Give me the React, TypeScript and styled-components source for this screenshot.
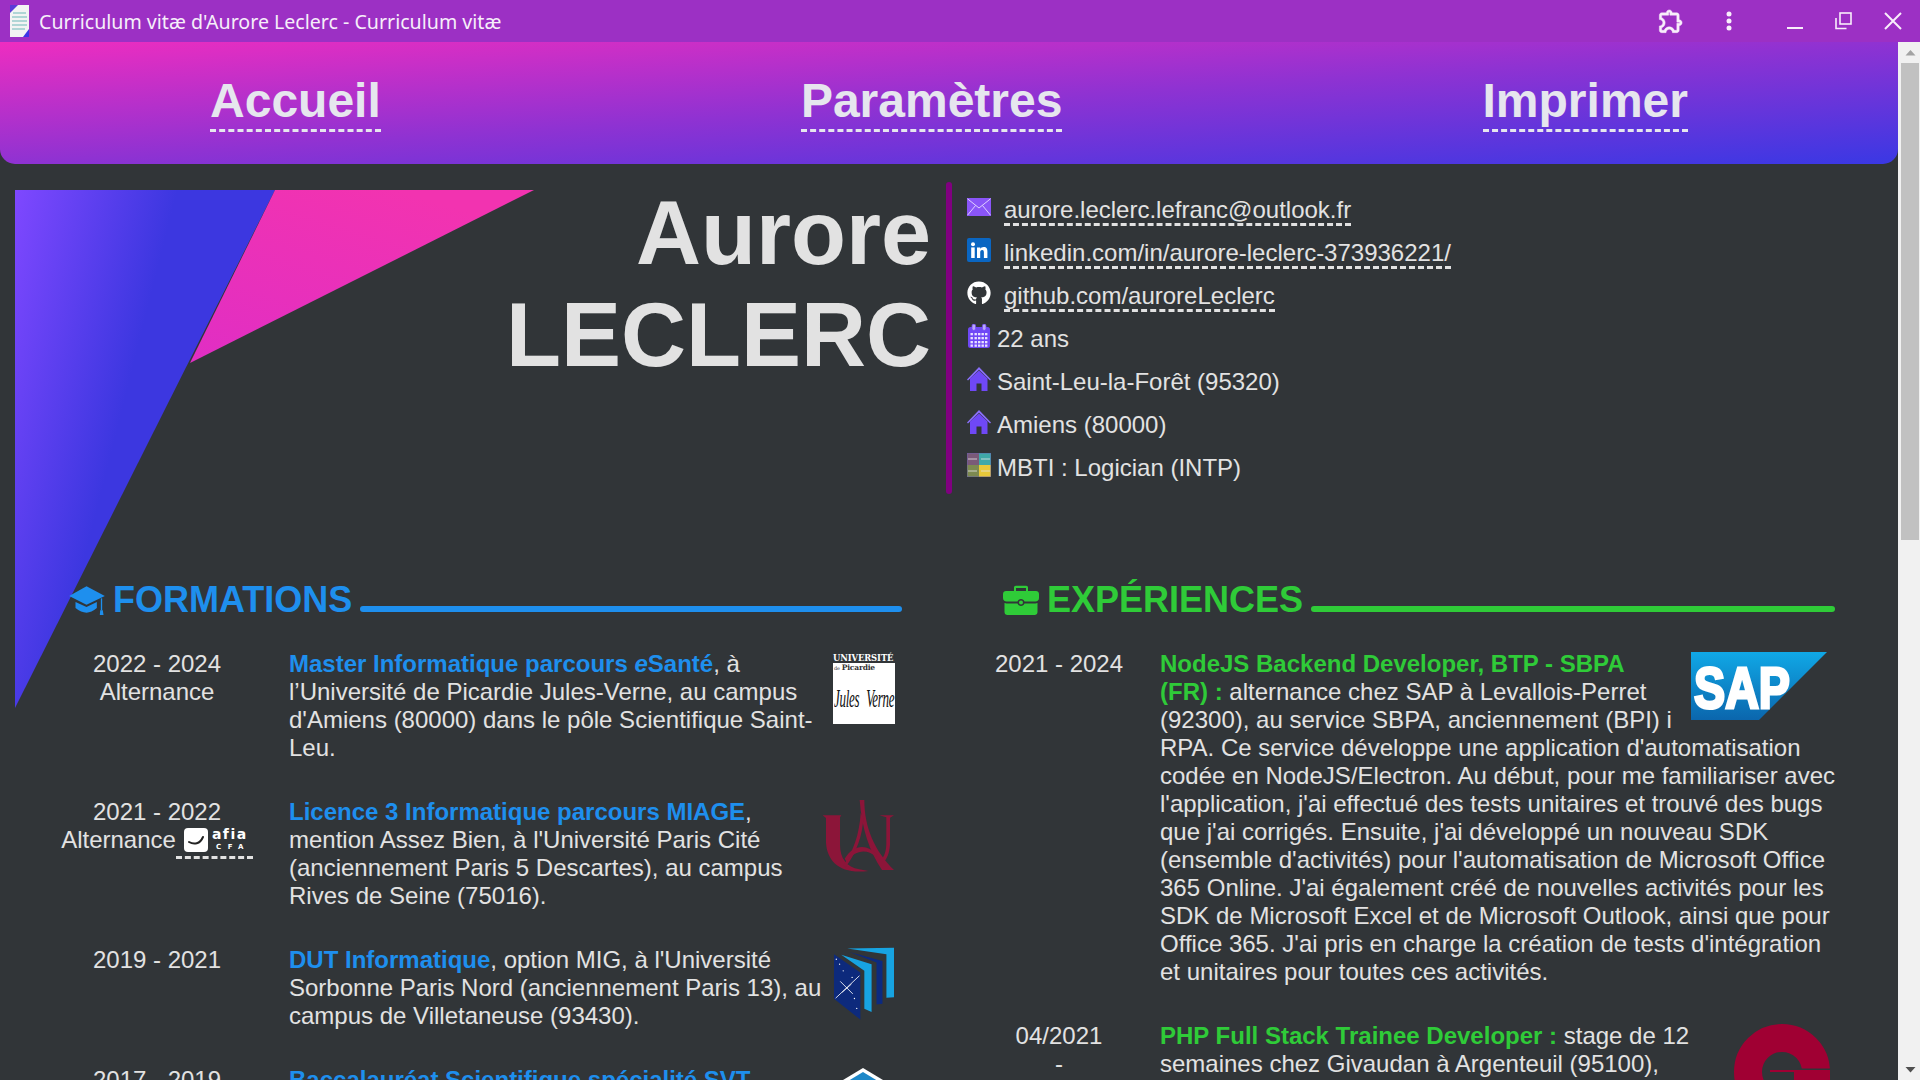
import React from "react";
import styled, { createGlobalStyle } from "styled-components";
import { FaGithub } from "react-icons/fa";

const Global = createGlobalStyle`
  html, body { margin: 0; padding: 0; height: 100%; overflow: hidden; background: #313538; }
  * { box-sizing: border-box; }
`;

const Frame = styled.div`
  width: 1920px; height: 1080px; display: flex; flex-direction: column; overflow: hidden;
  font-family: "Liberation Sans", Arial, sans-serif; color: #e2e2e2; background: #313538;
`;
const TitleBar = styled.div`
  flex: 0 0 42px; display: flex; align-items: center; background: #9c30c4; padding-left: 9px; color: #f6eefa;
`;
const Favicon = styled.svg` width: 21px; height: 34px; margin-right: 9px; `;
const WindowTitle = styled.span` font: 400 19.6px "Noto Sans", sans-serif; flex: 1; white-space: nowrap; `;
const WinButton = styled.button<{ $w: number; $ml?: number; $mr?: number }>`
  all: unset; width: ${p => p.$w}px; height: 42px; display: flex; align-items: center; justify-content: center; color: #f8eefb;
  margin-left: ${p => p.$ml ?? 0}px; margin-right: ${p => p.$mr ?? 0}px;
`;
const Body = styled.div` flex: 1; display: flex; min-height: 0; `;
const Scroller = styled.div` position: relative; width: 1898px; overflow: hidden; `;
const Scrollbar = styled.div`
  width: 22px; background: #f1f1f1; display: flex; flex-direction: column; align-items: center; justify-content: space-between; padding: 2px 0 0 2px;
`;
const ScrollArrow = styled.svg` width: 11px; height: 19px; flex: none; `;
const Thumb = styled.div` width: 18px; height: 477px; background: #c1c1c1; flex: none; `;
const ScrollSpacer = styled.div` flex: 1; `;

const Nav = styled.nav`
  height: 122px; display: flex; justify-content: space-around; align-items: flex-start; padding-top: 31px;
  border-radius: 0 0 15px 15px; background: linear-gradient(to bottom right, #ee2dc0 0%, #8f32d2 50%, #3a38e4 100%);
`;
const NavLink = styled.a`
  font-size: 48px; font-weight: 700; color: #e6e6ee; line-height: 55px; border-bottom: 3px dashed #e6e6ee; padding-bottom: 1px; display: block;
`;
const Decor = styled.svg` position: absolute; left: 15px; top: 148px; width: 519px; height: 518px; `;
const Hero = styled.header` position: relative; display: flex; margin-top: 18px; height: 312px; `;
const Name = styled.h1`
  flex: 0 0 946px; margin: 0; padding-right: 15px; text-align: right; font-size: 90px; font-weight: 700; line-height: 102px; color: #e2e2e2;
`;
const Bar = styled.div` width: 6px; border-radius: 3px; background: #800080; `;
const Contacts = styled.ul` list-style: none; margin: 0; padding: 7px 0 0 15px; font-size: 24px; `;
const ContactRow = styled.li` height: 43px; display: flex; align-items: center; `;
const ContactIcon = styled.span`
  width: 24px; height: 24px; display: flex; align-items: center; justify-content: center; margin: 0 6px 8px 0; flex: none;
`;
const ContactText = styled.span` margin-bottom: 2px; `;
const Link = styled.a`
  margin: 0 0 -1px 7px; color: #e2e2e2; border-bottom: 3px dashed #e2e2e2; line-height: 26px; display: block;
`;
const Columns = styled.div` display: flex; margin-top: 86px; position: relative; padding-left: 60px; `;
const Section = styled.section<{ $ml: number; $w: number }>` width: ${p => p.$w}px; margin-left: ${p => p.$ml}px; flex: none; `;
const Heading = styled.h2<{ $c: string; $pl: number; $pr?: number }>`
  display: flex; align-items: center; margin: 0 0 30px; padding: 0 ${p => p.$pr ?? 0}px 0 ${p => p.$pl}px; height: 40px; font-size: 36px; font-weight: 700; color: ${p => p.$c};
  svg { flex: none; margin-right: 8px; }
`;
const HeadingLine = styled.span<{ $c: string }>`
  flex: 1; height: 6px; border-radius: 3px; background: ${p => p.$c}; margin: 17px 0 0 8px;
`;
const Entry = styled.article<{ $date: number; $gap: number }>`
  display: grid; grid-template-columns: ${p => p.$date}px 1fr; column-gap: ${p => p.$gap}px; margin-bottom: 36px; font-size: 24px; line-height: 28px;
`;
const DateCell = styled.div` text-align: center; `;
const AfiaLink = styled.span`
  display: inline-flex; align-items: flex-start; gap: 4px; vertical-align: top; height: 33px; width: 77px; padding: 0 0 0 8px; border-bottom: 3px dashed #e2e2e2;
`;
const AfiaBox = styled.span`
  width: 24px; height: 24px; background: #fff; border-radius: 4px; display: flex; align-items: center; justify-content: center; flex: none; margin-top: 2px;
`;
const AfiaWords = styled.span`
  display: flex; flex-direction: column; color: #fff; align-items: center; font-family: "DejaVu Sans", sans-serif; font-weight: 700;
`;
const AfiaBig = styled.span` font-size: 14px; line-height: 17px; letter-spacing: 1.5px; `;
const AfiaSmall = styled.span` font-size: 7px; line-height: 9px; letter-spacing: 6.5px; margin-right: -6.5px; `;
const Desc = styled.div` min-width: 0; `;
const Strong = styled.b<{ $c: string }>` color: ${p => p.$c}; `;
const Logo = styled.div<{ $mr: number; $mt: number }>` float: right; margin: ${p => p.$mt}px ${p => p.$mr}px 0 9px; line-height: 0; `;
const UniBox = styled.div` width: 62px; color: #fff; display: flex; flex-direction: column; `;
const UniTop = styled.div`
  font: 700 8.4px/10px "DejaVu Serif", serif; color: #fff; white-space: nowrap; letter-spacing: -0.1px;
`;
const UniWhite = styled.div` height: 61px; background: #fff; color: #000; padding-left: 1px; overflow: hidden; `;
const UniSmall = styled.div` font: 700 7.5px/9px "DejaVu Serif", serif; color: #333; white-space: nowrap; letter-spacing: -0.2px; `;
const UniDe = styled.span` font-size: 5px; margin-right: 2px; font-weight: 400; `;
const UniSign = styled.div`
  font: italic 400 13px/15px "Liberation Serif", serif; white-space: nowrap; margin-top: 18px; transform: scaleY(1.9); letter-spacing: -0.3px; color: #111; word-spacing: 4px;
`;

const purple = "#6f48f6";
const blue = "#1e8fee";
const green = "#2fcb38";

const Envelope = () => (
  <svg width="24" height="18" viewBox="0 0 24 18"><rect width="24" height="18" fill="#8a55f8" /><path d="M0.5 0.8 12 10 23.5 0.8M0.5 17.2 8.5 7.5M23.5 17.2 15.5 7.5" fill="none" stroke="#e9dcff" strokeWidth="0.9" /></svg>
);
const LinkedIn = () => (
  <svg width="24" height="24" viewBox="0 0 24 24"><rect width="24" height="24" rx="2" fill="#0a66c2" /><circle cx="6" cy="6.2" r="2" fill="#fff" /><rect x="4.2" y="9.4" width="3.5" height="10.6" fill="#fff" /><path d="M10 9.4h3.3v1.5c.6-1 1.8-1.8 3.4-1.8 3 0 3.7 2 3.7 4.6V20h-3.5v-5.4c0-1.3-.2-2.6-1.7-2.6s-2 1.200-2 2.600V20H10Z" fill="#fff" /></svg>
);
const Calendar = () => (
  <svg width="22" height="24" viewBox="0 0 22 24">
    <rect x="0" y="3" width="22" height="21" rx="2.500" fill={purple} />
    <rect x="4" y="0" width="3.600" height="6.500" rx="1.800" fill="#b9a6fb" stroke={purple} strokeWidth="0.800" />
    <rect x="14.400" y="0" width="3.600" height="6.500" rx="1.800" fill="#b9a6fb" stroke={purple} strokeWidth="0.800" />
    {[9, 13, 17, 20.500].map(y => [2.500, 6.500, 10, 13.500, 17].map(x => (
      <rect key={`${x}-${y}`} x={x} y={y} width="2.400" height="2.300" fill="#e8e2ff" />
    )))}
  </svg>
);
const House = () => (
  <svg width="24" height="24" viewBox="0 0 24 24"><path d="M12 0 24 12.500 23 13.500 12 2.800 1 13.500 0 12.500Z" fill="#8a6ffa" /><path d="M12 3.500 20.500 11.500V24H14.500V16.500H9.500V24H3V11.500Z" fill={purple} /></svg>
);
const Mbti = () => (
  <svg width="24" height="24" viewBox="0 0 24 24">
    <rect width="12" height="12" fill="#7a5a78" /><rect x="12" width="12" height="12" fill="#3fa9a8" />
    <rect y="12" width="12" height="12" fill="#7d8a50" /><rect x="12" y="12" width="12" height="12" fill="#e8c93a" />
    <path d="M1 6H10M14 6H23M1 18H10M14 18H23" stroke="#e6e6e6" strokeWidth="0.800" />
    <rect x="0" y="0" width="24" height="24" fill="none" stroke="#6a5fb5" strokeWidth="0.800" />
  </svg>
);
const GradCap = () => (
  <svg width="36" height="29" viewBox="88 45 107 87" fill={blue}>
    <polygon points="140,46 195,75 140,101 88,75" />
    <path d="M107 93 140 108 171 93V111C160 120 150 125 140 125S118 120 107 111Z" />
    <path d="M183 82H187V118H183Z" />
    <path d="M181 118H189L191 132H180Z" />
  </svg>
);
const Briefcase = () => (
  <svg width="36" height="30" viewBox="0 0 36 30" fill={green}>
    <path d="M11 7V2.500C11 1.500 11.800.800 12.800.800H23.200C24.200.800 25 1.500 25 2.500V7H23V3H13V7Z" />
    <path d="M3 6H33C34.600 6 36 7.300 36 9V13C36 15 34.500 16.500 32.500 16.500H21.500C21 15 19.700 14 18 14S15 15 14.500 16.500H3.500C1.500 16.500 0 15 0 13V9C0 7.300 1.400 6 3 6Z" />
    <path d="M1.500 18C2.200 18.300 2.800 18.500 3.500 18.500H14.500C15 20 16.300 21 18 21S21 20 21.500 18.500H32.500C33.200 18.500 33.900 18.300 34.500 18V27C34.500 28.700 33.200 30 31.500 30H4.500C2.800 30 1.500 28.700 1.500 27Z" />
    <circle cx="18" cy="17.500" r="2" />
  </svg>
);
const SapLogo = () => (
  <svg width="136" height="68" viewBox="0 0 136 68">
    <defs><linearGradient id="sap" x1="0" y1="0" x2="0" y2="1"><stop offset="0" stopColor="#10a8e6" /><stop offset="1" stopColor="#0b66ad" /></linearGradient></defs>
    <polygon points="0,0 136,0 68,68 0,68" fill="url(#sap)" />
    <text x="3" y="56" fontFamily="Liberation Sans" fontWeight="700" fontSize="58" fill="#fff" textLength="96" lengthAdjust="spacingAndGlyphs" stroke="#fff" strokeWidth="3">SAP</text>
  </svg>
);
const ParisLogo = () => (
  <svg width="75" height="75" viewBox="60 500 225 225" fill="#8c1539">
    <path d="M68 552H124L120 558V640C120 680 140 708 178 714L205 719C120 730 82 690 78 635V560Z" />
    <path d="M238 552H282L270 559V640C268 665 262 680 250 694L246 684C256 668 259 655 259 632V558Z" />
    <path d="M179 506H193C193 590 225 660 282 716H246C208 660 185 590 179 506Z" />
    <path d="M182 545C178 610 160 660 130 702L136 708C170 665 188 610 190 560Z" />
    <path d="M134 682C160 640 200 636 232 670L228 676C200 652 165 655 140 692Z" />
  </svg>
);
const BookLogo = () => (
  <svg width="62" height="74" viewBox="100 78 188 224">
    <polygon points="143,82 285,80 285,230 262,232 262,100" fill="#17a4e2" />
    <polygon points="150,93 250,120 250,250 232,252 232,125" fill="#0c2a80" />
    <polygon points="125,101 217,130 217,275 195,265 195,150" fill="#17a4e2" />
    <polygon points="103,100 183,155 183,298 103,235" fill="#0d2a7c" />
    <path d="M108 233 180 165M122 182 160 220M128 215 156 190" stroke="#fff" strokeWidth="2.500" fill="none" />
    {[[120, 130], [131, 150], [110, 115], [165, 234], [172, 264], [158, 170]].map(([x, y]) => <circle key={x} cx={x} cy={y} r="2" fill="#fff" />)}
  </svg>
);
const DiamondLogo = () => (
  <svg width="50" height="60" viewBox="0 0 50 60"><polygon points="25,0 50,15 50,40 25,60 0,40 0,15" fill="#fff" /><polygon points="25,4 44,15.500 25,24 6,15.500" fill="#1e88c8" /></svg>
);
const CrimsonLogo = () => (
  <svg width="96" height="96" viewBox="0 0 96 96">
    <circle cx="48" cy="48" r="34" fill="none" stroke="#a00033" strokeWidth="28" />
    <rect x="63" y="44.500" width="33" height="1.500" fill="#313538" />
    <rect x="36" y="46" width="60" height="2" fill="#a00033" />
    <rect x="68" y="48" width="28" height="40" fill="#a00033" />
    <rect x="60" y="48" width="8" height="20" fill="#a00033" />
  </svg>
);

export default function App() {
  return (
    <Frame>
      <Global />
      <TitleBar>
        <Favicon viewBox="0 0 21 34">
          <rect x="1" y="1" width="19" height="32" fill="#f3f3f3" />
          <polygon points="1,1 9,1 1,9" fill="#5a3ad8" />
          <polygon points="20,33 14,33 20,25" fill="#3d36e6" />
          <path d="M4 9H17M3 13H18M3 17H18M3 21H18M3 25H16" stroke="#9cc" strokeWidth="1.300" />
        </Favicon>
        <WindowTitle>Curriculum vitæ d'Aurore Leclerc - Curriculum vitæ</WindowTitle>
        <WinButton $w={29}>
          <svg width="28" height="28" viewBox="0 0 24 24" fill="currentColor" stroke="currentColor" strokeWidth="0.4"><path d="M10.500 4.500c.28 0 .5.22.5.5v2h6v6h2c.28 0 .5.22.5.5s-.22.5-.5.5h-2v6h-2.120c-.68-1.750-2.390-3-4.380-3s-3.700 1.250-4.380 3H4v-2.120c1.750-.68 3-2.390 3-4.380 0-1.990-1.240-3.700-2.990-4.380L4 7h6V5c0-.28.22-.5.5-.5m0-2C9.120 2.500 8 3.620 8 5H4c-1.100 0-1.990.9-1.990 2v3.800h.29c1.490 0 2.700 1.210 2.700 2.700s-1.210 2.700-2.700 2.700H2V20c0 1.100.9 2 2 2h3.800v-.3c0-1.490 1.210-2.700 2.700-2.700s2.700 1.210 2.700 2.700v.3H17c1.100 0 2-.9 2-2v-4c1.380 0 2.500-1.120 2.500-2.500S20.380 11 19 11V7c0-1.100-.9-2-2-2h-4c0-1.380-1.120-2.500-2.500-2.500z" /></svg>
        </WinButton>
        <WinButton $w={30} $ml={29}>
          <svg width="6" height="20" viewBox="0 0 6 20" fill="currentColor"><circle cx="3" cy="3" r="2.500" /><circle cx="3" cy="10" r="2.500" /><circle cx="3" cy="17" r="2.500" /></svg>
        </WinButton>
        <WinButton $w={24} $ml={39}>
          <svg width="18" height="18" viewBox="0 0 18 18"><path d="M1 16H17" stroke="currentColor" strokeWidth="2" /></svg>
        </WinButton>
        <WinButton $w={20} $ml={26}>
          <svg width="18" height="18" viewBox="0 0 18 18" fill="none" stroke="currentColor" strokeWidth="1.600"><rect x="6" y="1" width="11" height="11" /><path d="M2 6V16.500H12.500" /></svg>
        </WinButton>
        <WinButton $w={20} $ml={30} $mr={17}>
          <svg width="18" height="18" viewBox="0 0 18 18" stroke="currentColor" strokeWidth="2"><path d="M1 1 17 17M17 1 1 17" /></svg>
        </WinButton>
      </TitleBar>
      <Body>
        <Scroller>
          <Decor viewBox="0 0 519 518">
            <defs>
              <linearGradient id="tl" x1="0" y1="0" x2="0.5" y2="0.25"><stop offset="0" stopColor="#7f48ff" /><stop offset="1" stopColor="#3c37e0" /></linearGradient>
              <linearGradient id="tp" x1="0.6" y1="0" x2="0" y2="1"><stop offset="0" stopColor="#f233b0" /><stop offset="1" stopColor="#e02ec4" /></linearGradient>
            </defs>
            <polygon points="0,0 260,0 0,518" fill="url(#tl)" />
            <polygon points="260,0 519,0 175,173" fill="url(#tp)" />
          </Decor>
          <Nav>
            <NavLink>Accueil</NavLink>
            <NavLink>Paramètres</NavLink>
            <NavLink>Imprimer</NavLink>
          </Nav>
          <Hero>
            <Name>Aurore<br />LECLERC</Name>
            <Bar />
            <Contacts>
              <ContactRow><ContactIcon><Envelope /></ContactIcon><Link>aurore.leclerc.lefranc@outlook.fr</Link></ContactRow>
              <ContactRow><ContactIcon><LinkedIn /></ContactIcon><Link>linkedin.com/in/aurore-leclerc-373936221/</Link></ContactRow>
              <ContactRow><ContactIcon><FaGithub size={24} color="#fff" /></ContactIcon><Link>github.com/auroreLeclerc</Link></ContactRow>
              <ContactRow><ContactIcon><Calendar /></ContactIcon><ContactText>22 ans</ContactText></ContactRow>
              <ContactRow><ContactIcon><House /></ContactIcon><ContactText>Saint-Leu-la-Forêt (95320)</ContactText></ContactRow>
              <ContactRow><ContactIcon><House /></ContactIcon><ContactText>Amiens (80000)</ContactText></ContactRow>
              <ContactRow><ContactIcon><Mbti /></ContactIcon><ContactText>MBTI : Logician (INTP)</ContactText></ContactRow>
            </Contacts>
          </Hero>
          <Columns>
            <Section $ml={0} $w={842}>
              <Heading $c={blue} $pl={9}>
                <GradCap />FORMATIONS<HeadingLine $c={blue} />
              </Heading>
              <Entry $date={194} $gap={35}>
                <DateCell>2022 - 2024<br />Alternance</DateCell>
                <Desc>
                  <Logo $mr={7} $mt={3}>
                    <UniBox>
                      <UniTop>UNIVERSITÉ</UniTop>
                      <UniWhite>
                        <UniSmall><UniDe>de</UniDe>Picardie</UniSmall>
                        <UniSign>Jules Verne</UniSign>
                      </UniWhite>
                    </UniBox>
                  </Logo>
                  <Strong $c={blue}>Master Informatique parcours <i>e</i>Santé</Strong>, à l’Université de Picardie Jules-Verne, au campus d'Amiens (80000) dans le pôle Scientifique Saint-Leu.
                </Desc>
              </Entry>
              <Entry $date={194} $gap={35}>
                <DateCell>
                  2021 - 2022<br />Alternance
                  <AfiaLink>
                    <AfiaBox><svg width="18" height="12" viewBox="0 0 18 12"><path d="M2 8C7 11 13 10 16 3" fill="none" stroke="#222" strokeWidth="2" strokeLinecap="round" /></svg></AfiaBox>
                    <AfiaWords><AfiaBig>afia</AfiaBig><AfiaSmall>CFA</AfiaSmall></AfiaWords>
                  </AfiaLink>
                </DateCell>
                <Desc>
                  <Logo $mr={7} $mt={0}><ParisLogo /></Logo>
                  <Strong $c={blue}>Licence 3 Informatique parcours MIAGE</Strong>, mention Assez Bien, à l'Université Paris Cité (anciennement Paris 5 Descartes), au campus Rives de Seine (75016).
                </Desc>
              </Entry>
              <Entry $date={194} $gap={35}>
                <DateCell>2019 - 2021</DateCell>
                <Desc>
                  <Logo $mr={7} $mt={1}><BookLogo /></Logo>
                  <Strong $c={blue}>DUT Informatique</Strong>, option MIG, à l'Université Sorbonne Paris Nord (anciennement Paris 13), au campus de Villetaneuse (93430).
                </Desc>
              </Entry>
              <Entry $date={194} $gap={35}>
                <DateCell>2017 - 2019</DateCell>
                <Desc>
                  <Logo $mr={14} $mt={2}><DiamondLogo /></Logo>
                  <Strong $c={blue}>Baccalauréat Scientifique spécialité SVT</Strong>
                </Desc>
              </Entry>
            </Section>
            <Section $ml={91} $w={848}>
              <Heading $c={green} $pl={10} $pr={6}>
                <Briefcase />EXPÉRIENCES<HeadingLine $c={green} />
              </Heading>
              <Entry $date={132} $gap={35}>
                <DateCell>2021 - 2024</DateCell>
                <Desc>
                  <Logo $mr={14} $mt={2}><SapLogo /></Logo>
                  <Strong $c={green}>NodeJS Backend Developer, BTP - SBPA (FR)&nbsp;:</Strong> alternance chez SAP à Levallois-Perret (92300), au service SBPA, anciennement (BPI) i RPA. Ce service développe une application d'automatisation codée en NodeJS/Electron. Au début, pour me familiariser avec l'application, j'ai effectué des tests unitaires et trouvé des bugs que j'ai corrigés. Ensuite, j'ai développé un nouveau SDK (ensemble d'activités) pour l'automatisation de Microsoft Office 365 Online. J'ai également créé de nouvelles activités pour les SDK de Microsoft Excel et de Microsoft Outlook, ainsi que pour Office 365. J'ai pris en charge la création de tests d'intégration et unitaires pour toutes ces activités.
                </Desc>
              </Entry>
              <Entry $date={132} $gap={35}>
                <DateCell>04/2021<br />-</DateCell>
                <Desc>
                  <Logo $mr={11} $mt={2}><CrimsonLogo /></Logo>
                  <Strong $c={green}>PHP Full Stack Trainee Developer&nbsp;:</Strong> stage de 12 semaines chez Givaudan à Argenteuil (95100),
                </Desc>
              </Entry>
            </Section>
          </Columns>
        </Scroller>
        <Scrollbar>
          <ScrollArrow viewBox="0 0 11 19"><polygon points="5.500,6 10.500,11.500 0.500,11.500" fill="#a3a3a3" /></ScrollArrow>
          <Thumb />
          <ScrollSpacer />
          <ScrollArrow viewBox="0 0 11 19"><polygon points="0.500,6 10.500,6 5.500,11.500" fill="#505050" /></ScrollArrow>
        </Scrollbar>
      </Body>
    </Frame>
  );
}
